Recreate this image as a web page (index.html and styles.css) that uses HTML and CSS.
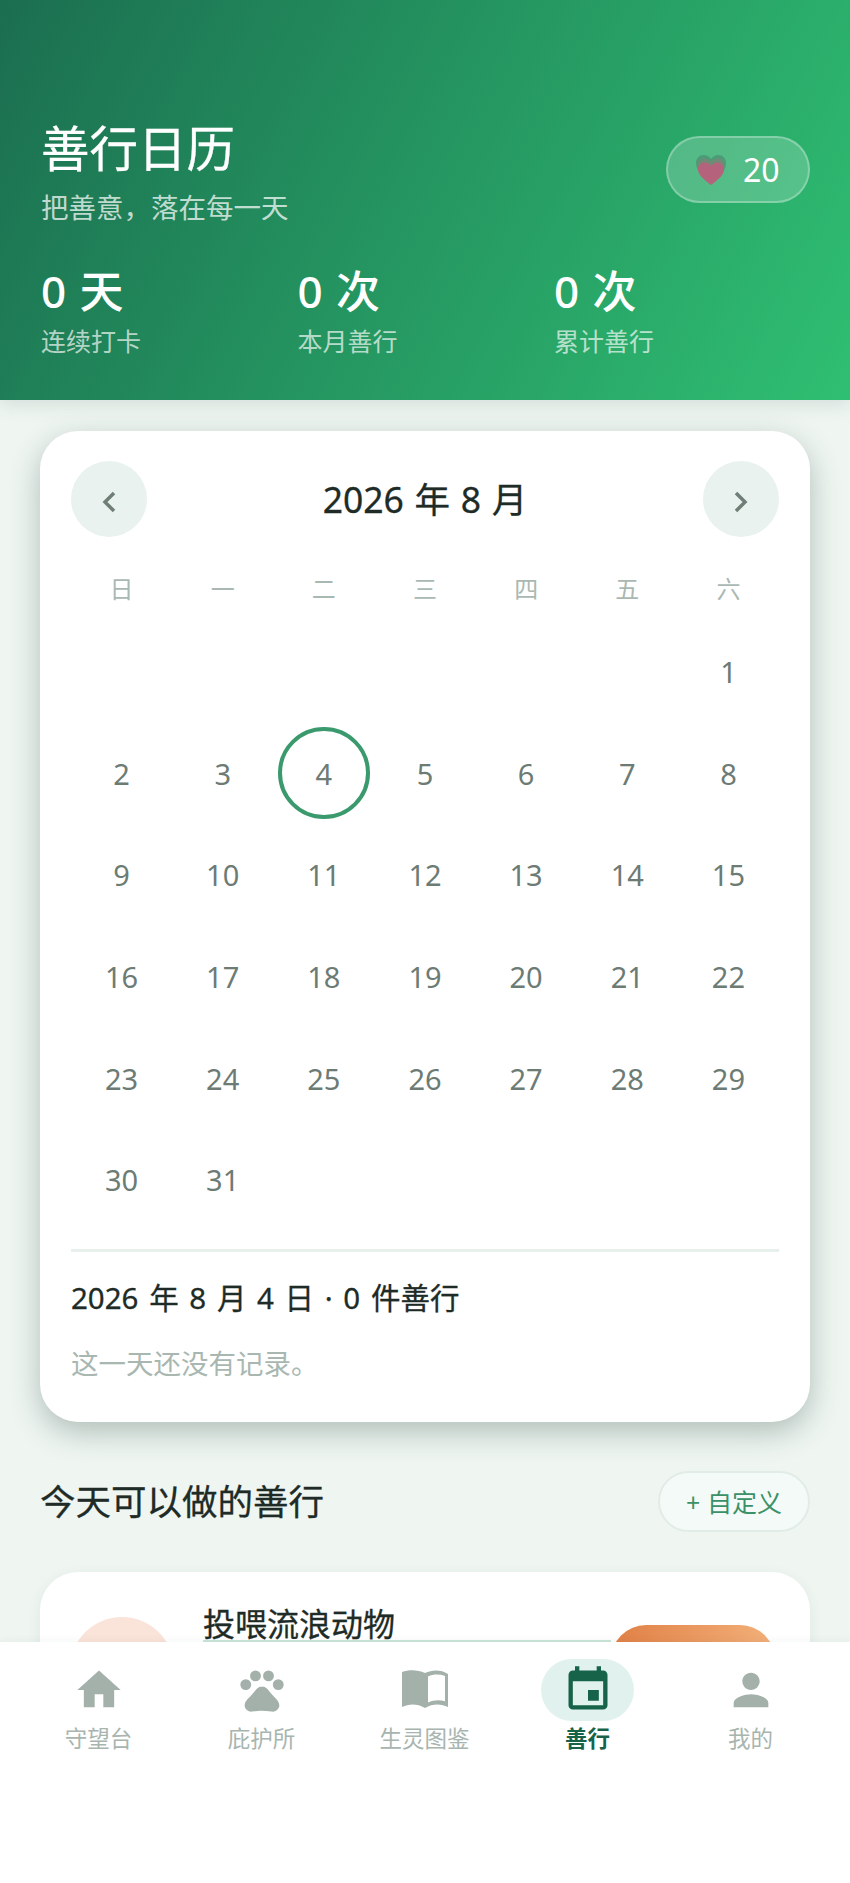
FILE: index.html
```html
<!DOCTYPE html>
<html lang="zh-CN">
<head>
<meta charset="utf-8">
<title>善行日历</title>
<link rel="stylesheet" href="styles.css">
</head>
<body>
<div class="page">
  <header class="hero">
    <div class="hero-top">
      <div>
        <h1 class="hero-title">善行日历</h1>
        <p class="hero-sub">把善意，落在每一天</p>
      </div>
      <div class="merit">
        <svg class="merit-heart" viewBox="0 0 32 30">
          <path fill="#4b9273" opacity=".8" d="M16 29C9 22 1 16.500 1 8 1 3.500 4.500 0 8.500 0c3 0 5.800 1.500 7.500 4 1.700-2.500 4.500-4 7.500-4C27.500 0 31 3.500 31 8c0 8.500-8 14-15 21z"/>
          <path fill="#7d8474" opacity=".75" d="M16 29.500C9.500 24 2.500 19 2.500 11 2.500 7 5.500 3.500 9.500 3.500c2.600 0 5 1.300 6.500 3.500 1.500-2.200 3.900-3.500 6.500-3.500 4 0 7 3.500 7 7.500 0 8-7 13-13.500 18.500z"/>
          <path fill="#b5637c" d="M16 30C10 25 3 21 3 14 3 10.500 6 7.500 9.500 7.500c2.600 0 5 1.300 6.500 3.500 1.500-2.200 3.900-3.500 6.500-3.500C26 7.500 29 10.500 29 14c0 7-7 11-13 16z"/>
        </svg>
        <span class="merit-num">20</span>
      </div>
    </div>
    <div class="stats">
      <div><div class="stat-value">0 天</div><div class="stat-label">连续打卡</div></div>
      <div><div class="stat-value">0 次</div><div class="stat-label">本月善行</div></div>
      <div><div class="stat-value">0 次</div><div class="stat-label">累计善行</div></div>
    </div>
  </header>

  <main class="content">
    <section class="card">
      <div class="month-row">
        <button class="month-btn" aria-label="上个月"><svg viewBox="0 0 14 22"><polyline points="12,2 3,11 12,20"/></svg></button>
        <div class="month-title">2026 年 8 月</div>
        <button class="month-btn" aria-label="下个月"><svg viewBox="0 0 14 22"><polyline points="2,2 11,11 2,20"/></svg></button>
      </div>
      <div class="weekdays">
        <span>日</span><span>一</span><span>二</span><span>三</span><span>四</span><span>五</span><span>六</span>
      </div>
      <div class="days">
        <span></span><span></span><span></span><span></span><span></span><span></span><span class="day">1</span>
        <span class="day">2</span><span class="day">3</span><span class="day today">4</span><span class="day">5</span><span class="day">6</span><span class="day">7</span><span class="day">8</span>
        <span class="day">9</span><span class="day">10</span><span class="day">11</span><span class="day">12</span><span class="day">13</span><span class="day">14</span><span class="day">15</span>
        <span class="day">16</span><span class="day">17</span><span class="day">18</span><span class="day">19</span><span class="day">20</span><span class="day">21</span><span class="day">22</span>
        <span class="day">23</span><span class="day">24</span><span class="day">25</span><span class="day">26</span><span class="day">27</span><span class="day">28</span><span class="day">29</span>
        <span class="day">30</span><span class="day">31</span>
      </div>
      <div class="detail">
        <div class="detail-title">2026 年 8 月 4 日 · 0 件善行</div>
        <div class="detail-empty">这一天还没有记录。</div>
      </div>
    </section>

    <div class="section-row">
      <h2 class="section-title">今天可以做的善行</h2>
      <button class="custom-btn"><span class="plus">+</span> 自定义</button>
    </div>

    <section class="task">
      <div class="task-icon"></div>
      <div class="task-body">
        <div class="task-name">投喂流浪动物</div>
        <div class="task-bar"></div>
      </div>
      <div class="task-action"></div>
    </section>
  </main>

  <nav class="tabbar">
    <div class="tab">
      <div class="tab-icon">
        <svg viewBox="0 0 24 24"><path d="M10 20v-6h4v6h5v-8h3L12 3 2 12h3v8z"/></svg>
      </div>
      <span class="tab-label">守望台</span>
    </div>
    <div class="tab">
      <div class="tab-icon">
        <svg viewBox="0 0 24 24"><circle cx="4.500" cy="9.500" r="2.500"/><circle cx="9" cy="5.500" r="2.500"/><circle cx="15" cy="5.500" r="2.500"/><circle cx="19.500" cy="9.500" r="2.500"/><path d="M17.340 14.860c-.87-1.020-1.600-1.890-2.480-2.910-.46-.54-1.050-1.080-1.750-1.320-.11-.04-.22-.07-.33-.09-.25-.04-.52-.04-.78-.04s-.53 0-.79.05c-.11.02-.22.05-.33.09-.7.24-1.280.78-1.750 1.320-.87 1.020-1.600 1.890-2.480 2.910-1.310 1.310-2.920 2.760-2.620 4.790.29 1.020 1.020 2.030 2.330 2.320.73.15 3.060-.44 5.540-.44h.18c2.480 0 4.810.58 5.540.44 1.310-.29 2.040-1.310 2.330-2.320.31-2.040-1.300-3.490-2.610-4.800z"/></svg>
      </div>
      <span class="tab-label">庇护所</span>
    </div>
    <div class="tab">
      <div class="tab-icon">
        <svg viewBox="0 0 52 52"><path fill-rule="evenodd" d="M3 8c7-2.500 15.500-2.500 23 1 7.500-3.500 16-3.500 23 1v33c-7-3.500-15.500-3.500-23 1-7.500-4.500-16-4.500-23-1zM29 12.500V38.500c5.500-2.500 11.500-2.800 17-1.300V12c-5.500-2-11.500-2-17 .5z"/></svg>
      </div>
      <span class="tab-label">生灵图鉴</span>
    </div>
    <div class="tab tab-active">
      <div class="tab-icon">
        <svg viewBox="0 0 24 24"><path d="M17 12h-5v5h5v-5zM16 1v2H8V1H6v2H5c-1.110 0-1.990.9-1.990 2L3 19c0 1.100.89 2 2 2h14c1.100 0 2-.9 2-2V5c0-1.100-.9-2-2-2h-1V1h-2zm3 18H5V8h14v11z"/></svg>
      </div>
      <span class="tab-label">善行</span>
    </div>
    <div class="tab">
      <div class="tab-icon">
        <svg viewBox="0 0 24 24"><path d="M12 12c2.210 0 4-1.790 4-4s-1.790-4-4-4-4 1.790-4 4 1.790 4 4 4zm0 2c-2.670 0-8 1.340-8 4v2h16v-2c0-2.660-5.330-4-8-4z"/></svg>
      </div>
      <span class="tab-label">我的</span>
    </div>
  </nav>
</div>
</body>
</html>
```

FILE: styles.css
```css
* { box-sizing: border-box; }
html, body { margin: 0; padding: 0; }
body {
  font-family: "Noto Sans", "Noto Sans CJK SC", sans-serif;
  background: #eff6f2;
  color: #1e2b26;
}
button { font-family: inherit; padding: 0; }
h1, h2, p { margin: 0; font-weight: 400; }

.page {
  position: relative;
  width: 850px;
  height: 1883px;
  overflow: hidden;
}

/* hero */
.hero {
  height: 400px;
  padding: 118px 40px 0 41px;
  background: linear-gradient(118deg, #1b6e50 0%, #2fbf72 100%);
  box-shadow: 0 4px 18px rgba(30, 70, 55, .14);
  color: #fff;
}
.hero-top { display: flex; justify-content: space-between; align-items: center; }
.hero-title { font-size: 48.500px; line-height: 60px; -webkit-text-stroke: .3px #fff; }
.hero-sub { margin-top: 12px; font-size: 27.500px; line-height: 36px; color: rgba(255, 255, 255, .72); }
.merit {
  display: flex;
  align-items: center;
  gap: 16px;
  width: 144px;
  height: 67px;
  margin-top: -5px;
  padding-left: 27px;
  border: 2px solid rgba(255, 255, 255, .28);
  border-radius: 34px;
  background: rgba(255, 255, 255, .2);
}
.merit-heart { width: 32px; height: 30px; }
.merit-num { font-size: 32px; line-height: 40px; }

.stats {
  display: grid;
  grid-template-columns: repeat(3, 256.500px);
  margin-top: 37px;
}
.stat-value { font-size: 44px; line-height: 56px; font-weight: 500; word-spacing: 2px; }
.stat-label { margin-top: 5px; font-size: 25px; line-height: 34px; color: rgba(255, 255, 255, .68); }

/* content */
.content { padding: 31px 40px 0; }
.card {
  padding: 30px 31px 38px;
  border-radius: 38px;
  background: #fff;
  box-shadow: 0 10px 30px rgba(30, 60, 50, .3);
}
.month-row { display: flex; justify-content: space-between; align-items: center; }
.month-btn {
  display: flex;
  align-items: center;
  justify-content: center;
  width: 76px;
  height: 76px;
  padding-top: 6px;
  border: 0;
  border-radius: 50%;
  background: #e9f2ee;
}
.month-btn svg { width: 14px; height: 22px; fill: none; stroke: #6f7f78; stroke-width: 3.500; }
.month-title { font-size: 35.500px; line-height: 50px; word-spacing: 1.500px; color: #1e2b26; -webkit-text-stroke: .3px #1e2b26; }

.weekdays {
  display: grid;
  grid-template-columns: repeat(7, 1fr);
  margin-top: 32px;
  font-size: 24px;
  line-height: 40px;
  text-align: center;
  color: #aab8b2;
}
.days {
  display: grid;
  grid-template-columns: repeat(7, 1fr);
  grid-auto-rows: 101.600px;
  margin-top: 12px;
}
.day {
  display: flex;
  align-items: center;
  justify-content: center;
  font-size: 29px;
  color: #6d7b75;
}
.today {
  width: 92px;
  height: 92px;
  margin: 4.800px auto;
  border: 4px solid #3a9a6e;
  border-radius: 50%;
}
.detail { margin-top: 18px; padding-top: 26px; border-top: 3px solid #e8f0ec; }
.detail-title { font-size: 29.500px; line-height: 40px; word-spacing: 3px; color: #1e2b26; -webkit-text-stroke: .3px #1e2b26; }
.detail-empty { margin-top: 26px; font-size: 27.500px; line-height: 40px; color: #a9b7b1; }

.section-row {
  display: flex;
  justify-content: space-between;
  align-items: center;
  margin-top: 49px;
  height: 61px;
}
.section-title { font-size: 35.500px; line-height: 50px; color: #1e2b26; -webkit-text-stroke: .3px #1e2b26; }
.custom-btn {
  width: 152px;
  height: 61px;
  border: 2px solid #e2ece7;
  border-radius: 31px;
  background: #f4faf7;
  color: #3a9168;
  font-size: 25px;
}

.task {
  display: flex;
  align-items: flex-start;
  height: 260px;
  margin-top: 40px;
  padding: 36px 35px 0 30px;
  border-radius: 38px;
  background: #fff;
  box-shadow: 0 4px 14px rgba(30, 60, 50, .08);
}
.task-icon {
  flex: none;
  width: 104px;
  height: 104px;
  margin-top: 9px;
  border-radius: 50%;
  background: #fae3d9;
}
.task-body { flex: 1; margin-left: 29px; }
.task-name { font-size: 32px; line-height: 32px; color: #1e2b26; -webkit-text-stroke: .3px #1e2b26; }
.task-bar { height: 6px; background: #c9e6d8; }
.task-action {
  flex: none;
  width: 164px;
  height: 70px;
  margin-top: 17px;
  border-radius: 35px;
  background: linear-gradient(90deg, #e08045, #f3b07a);
}

/* tab bar */
.tabbar {
  position: absolute;
  left: 0;
  right: 0;
  bottom: 0;
  display: grid;
  grid-template-columns: repeat(5, 1fr);
  height: 241px;
  padding: 17px 18px 0 17px;
  background: #fff;
  box-shadow: 0 -2px 8px rgba(30, 60, 50, .04);
}
.tab { display: flex; flex-direction: column; align-items: center; }
.tab-icon {
  display: flex;
  align-items: center;
  justify-content: center;
  width: 93px;
  height: 62px;
  border-radius: 31px;
}
.tab-icon svg { width: 52px; height: 52px; fill: #a3b1aa; }
.tab-label { margin-top: 3px; font-size: 22.500px; line-height: 30px; color: #a8b5af; }
.tab-active .tab-icon { background: #e1f2ee; }
.tab-active .tab-icon svg { fill: #17634a; }
.tab-active .tab-label { color: #17634a; font-weight: 700; }
```
